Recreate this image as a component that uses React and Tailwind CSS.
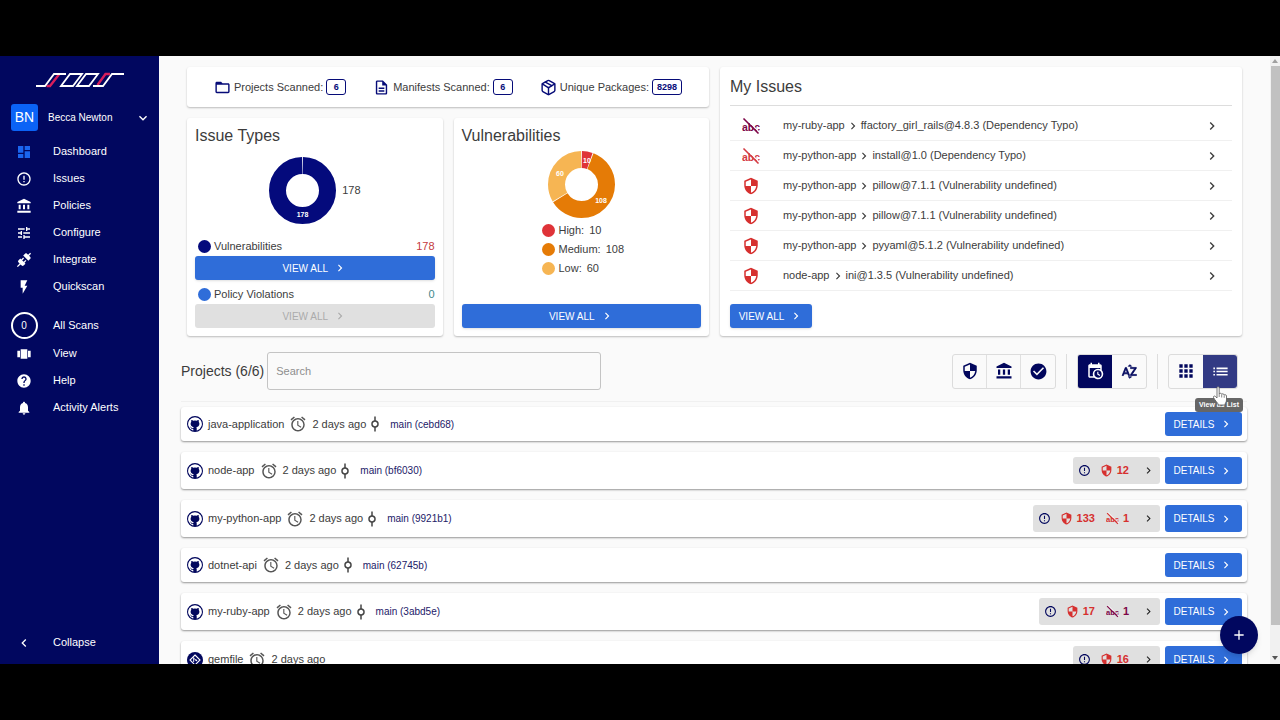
import React from 'react';
import { useState } from 'react';
import {
  MdAccountBalance, MdAdd, MdAlarm, MdApps, MdCheckCircle, MdChevronLeft, MdChevronRight, MdCommit,
  MdDashboard, MdErrorOutline, MdExpandMore, MdFlashOn, MdFolderOpen, MdHelp, MdList, MdNotifications,
  MdOutlineDescription, MdSecurity, MdSortByAlpha, MdTune, MdViewCarousel
} from 'react-icons/md';
import { LuPackage } from 'react-icons/lu';
import { VscGithub } from 'react-icons/vsc';

const PlugIcon = ({ size }) => (
  <svg width={size} height={size} viewBox="0 0 24 24" fill="currentColor">
    <path d="M21.4 7.5C22.2 8.3 22.2 9.6 21.4 10.3L18.6 13.1L10.8 5.3L13.6 2.5C14.4 1.7 15.7 1.7 16.4 2.5L18.2 4.3L21.2 1.3L22.6 2.7L19.6 5.7L21.4 7.5M15.6 13.3L14.2 11.9L11.4 14.7L9.3 12.6L12.1 9.8L10.7 8.4L7.9 11.2L6.4 9.8L3.6 12.6C2.8 13.4 2.8 14.7 3.6 15.4L5.4 17.2L1.4 21.2L2.8 22.6L6.8 18.6L8.6 20.4C9.4 21.2 10.7 21.2 11.4 20.4L14.2 17.6L12.8 16.2L15.6 13.3Z" />
  </svg>
);

const CalendarClockIcon = ({ size }) => (
  <svg width={size} height={size} viewBox="0 0 24 24" fill="currentColor">
    <path d="M15,13H16.5V15.82L18.94,17.23L18.19,18.53L15,16.69V13M19,8H5V19H9.67C9.24,18.09 9,17.07 9,16A7,7 0 0,1 16,9C17.07,9 18.09,9.24 19,9.67V8M5,21C3.89,21 3,20.1 3,19V5C3,3.89 3.89,3 5,3H6V1H8V3H16V1H18V3H19A2,2 0 0,1 21,5V11.1C22.24,12.36 23,14.09 23,16A7,7 0 0,1 16,23C14.09,23 12.36,22.24 11.1,21H5M16,11.15A4.85,4.85 0 0,0 11.15,16C11.15,18.68 13.32,20.85 16,20.85A4.85,4.85 0 0,0 20.85,16C20.85,13.32 18.68,11.15 16,11.15Z" />
  </svg>
);

// struck-through "abc" used for dependency typos
const TypoIcon = ({ size, className }) => (
  <svg width={size} height={size} viewBox="0 0 24 24" className={className}>
    <text x="12" y="18" textAnchor="middle" fontSize="14" fontWeight="700" fill="currentColor" fontFamily="Liberation Sans, sans-serif">abc</text>
    <path d="M3.500 0.500 24 21" stroke="#fff" strokeWidth="1.6" />
    <path d="M2 2 22 22" stroke="currentColor" strokeWidth="2.2" />
  </svg>
);

const GitIcon = ({ size }) => (
  <svg width={size} height={size} viewBox="0 0 24 24">
    <circle cx="12" cy="12" r="12" fill="currentColor" />
    <path d="M12 4.5 19.5 12 12 19.5 4.5 12Z" fill="none" stroke="#fff" strokeWidth="1.6" />
    <path d="M10 8v7M10 9.5l4 3" fill="none" stroke="#fff" strokeWidth="1.4" />
    <circle cx="14" cy="12.5" r="1.4" fill="#fff" />
  </svg>
);

const Logo = () => (
  <svg width="88" height="16" viewBox="0 0 88 16" fill="none" strokeWidth="1.8">
    <path d="M10.500 14H14L23 2.500" stroke="#d81e5b" strokeWidth="2.4" />
    <path d="M61.500 13 69.500 2H74" stroke="#d81e5b" strokeWidth="2.4" />
    <path d="M0 14H9L18 2H30" stroke="#fff" />
    <path d="M25 14 34 2H46L37 14Z" stroke="#fff" />
    <path d="M41 14 50 2H62L53 14Z" stroke="#fff" />
    <path d="M57 14H67L76 2H88" stroke="#fff" />
  </svg>
);

const Donut = ({ slices, labels }) => {
  const total = slices.reduce((sum, s) => sum + s.value, 0);
  let start = 0;
  return (
    <svg width="67" height="67" viewBox="0 0 67 67">
      {slices.map(s => {
        const offset = start;
        start += s.value;
        return (
          <circle
            key={s.color}
            cx="33.5" cy="33.5" r="25" fill="none"
            stroke={s.color} strokeWidth="17" pathLength={total}
            strokeDasharray={`${s.value - 0.8} ${total - s.value + 0.8}`}
            strokeDashoffset={-offset - 0.4}
            transform="rotate(-90 33.5 33.5)"
          />
        );
      })}
      {labels.map(l => (
        <text key={l.text} x={l.x} y={l.y} textAnchor="middle" fontSize="7" fontWeight="700" fill="#fff">{l.text}</text>
      ))}
    </svg>
  );
};

const navItems = [
  { label: 'Dashboard', Icon: MdDashboard, active: true },
  { label: 'Issues', Icon: MdErrorOutline },
  { label: 'Policies', Icon: MdAccountBalance },
  { label: 'Configure', Icon: MdTune },
  { label: 'Integrate', Icon: PlugIcon },
  { label: 'Quickscan', Icon: MdFlashOn }
];

const moreItems = [
  { label: 'View', Icon: MdViewCarousel },
  { label: 'Help', Icon: MdHelp },
  { label: 'Activity Alerts', Icon: MdNotifications }
];

const stats = [
  { label: 'Projects Scanned:', value: '6', Icon: MdFolderOpen },
  { label: 'Manifests Scanned:', value: '6', Icon: MdOutlineDescription },
  { label: 'Unique Packages:', value: '8298', Icon: LuPackage }
];

const severities = [
  { label: 'High:', value: 10, dot: 'bg-[#df3338]' },
  { label: 'Medium:', value: 108, dot: 'bg-[#e57b06]' },
  { label: 'Low:', value: 60, dot: 'bg-[#f6b553]' }
];

const issues = [
  { app: 'my-ruby-app', text: 'ffactory_girl_rails@4.8.3 (Dependency Typo)', Icon: TypoIcon, color: 'text-[#7d0546]' },
  { app: 'my-python-app', text: 'install@1.0 (Dependency Typo)', Icon: TypoIcon, color: 'text-[#d43b42]' },
  { app: 'my-python-app', text: 'pillow@7.1.1 (Vulnerability undefined)', Icon: MdSecurity, color: 'text-[#d6302f]' },
  { app: 'my-python-app', text: 'pillow@7.1.1 (Vulnerability undefined)', Icon: MdSecurity, color: 'text-[#d6302f]' },
  { app: 'my-python-app', text: 'pyyaml@5.1.2 (Vulnerability undefined)', Icon: MdSecurity, color: 'text-[#d6302f]' },
  { app: 'node-app', text: 'ini@1.3.5 (Vulnerability undefined)', Icon: MdSecurity, color: 'text-[#d6302f]' }
];

const projects = [
  { name: 'java-application', branch: 'main (cebd68)' },
  { name: 'node-app', branch: 'main (bf6030)', vulns: 12 },
  { name: 'my-python-app', branch: 'main (9921b1)', vulns: 133, typos: 1, typoColor: 'text-[#d6302f]' },
  { name: 'dotnet-api', branch: 'main (62745b)' },
  { name: 'my-ruby-app', branch: 'main (3abd5e)', vulns: 17, typos: 1, typoColor: 'text-[#7d0546]' },
  { name: 'gemfile', vulns: 16 }
];

const NavItem = ({ label, Icon, active }) => (
  <a href="#" className="flex h-[27px] items-center">
    <span className={active ? 'flex w-12 justify-center text-[#1a66f0]' : 'flex w-12 justify-center'}><Icon size={16} /></span>
    <span className="pl-[5px]">{label}</span>
  </a>
);

const ViewAll = ({ className = '', disabled }) => (
  <button
    disabled={disabled}
    className={`flex h-6 items-center justify-center gap-[5px] rounded-[3px] text-[10px] ${disabled ? 'bg-[#e0e0e0] text-[#ababab]' : 'bg-[#2f6dd9] text-white shadow-sm'} ${className}`}
  >
    VIEW ALL <MdChevronRight size={14} stroke="currentColor" className="[&>path[fill=none]]:stroke-none" />
  </button>
);

const Card = ({ className = '', children }) => (
  <section className={`rounded-[3px] bg-white shadow-[0_1px_2px_rgba(0,0,0,0.25)] ${className}`}>{children}</section>
);

const ToolButton = ({ label, on, children }) => (
  <button aria-label={label} className={`flex h-full w-[34px] items-center justify-center ${on || 'text-[#02075d]'}`}>{children}</button>
);

const Sidebar = () => (
  <aside className="flex w-[159px] shrink-0 flex-col bg-[#01075f] text-[11px] text-white">
    <div className="flex h-12 items-center justify-center"><Logo /></div>
    <button className="flex h-[27px] items-center pr-2 pl-[11px] text-[10px]">
      <span className="flex h-[27px] w-[27px] items-center justify-center rounded-[3px] bg-[#0b63f6] text-[14px]">BN</span>
      <span className="flex-1 pl-[10px] text-left">Becca Newton</span>
      <MdExpandMore size={16} />
    </button>
    <nav className="flex flex-1 flex-col pt-[7px] pb-2">
      {navItems.map(item => <NavItem key={item.label} {...item} />)}
      <a href="#" className="mt-[10px] flex h-[30px] items-center">
        <span className="flex w-12 justify-center">
          <span className="flex h-[27px] w-[27px] items-center justify-center rounded-full border-2 border-white text-[10px]">0</span>
        </span>
        <span className="pl-[5px]">All Scans</span>
      </a>
      {moreItems.map(item => <NavItem key={item.label} {...item} />)}
      <button className="mt-auto flex h-[27px] items-center">
        <span className="flex w-12 justify-center"><MdChevronLeft size={16} /></span>
        <span className="pl-[5px]">Collapse</span>
      </button>
    </nav>
  </aside>
);

const ProjectRow = ({ project }) => (
  <li className="flex items-center gap-[5px] rounded-[3px] bg-white p-[5px] pl-[6px] shadow-[0_1px_2px_rgba(0,0,0,0.4)]">
    <div className="flex flex-1 items-center">
      <span className="mr-[5px] text-[#02075d]">{project.branch ? <VscGithub size={16} /> : <GitIcon size={16} />}</span>
      <span>{project.name}</span>
      <MdAlarm size={18} className="mx-[5px] text-[#555]" />
      <span>2 days ago</span>
      {project.branch && <MdCommit size={18} className="rotate-90 text-[#444]" />}
      {project.branch && <a href="#" className="pl-[6px] text-[10px] text-[#1c2068]">{project.branch}</a>}
    </div>
    {project.vulns && (
      <button className="flex h-[27px] items-center rounded-[3px] bg-[#e0e0e0] px-[5px] font-bold text-[#d6302f]">
        <MdErrorOutline size={13} className="mr-[9px] text-[#02075d]" />
        <MdSecurity size={13} className="mr-1" />
        {project.vulns}
        {project.typos && (
          <span className={`ml-[11px] flex items-center gap-1 ${project.typoColor}`}>
            <TypoIcon size={13} />{project.typos}
          </span>
        )}
        <MdChevronRight size={13} stroke="currentColor" className="ml-[13px] text-[#222] [&>path[fill=none]]:stroke-none" />
      </button>
    )}
    <button className={`${project.vulns ? 'h-[27px]' : 'h-6'} flex w-[77px] items-center justify-center gap-[5px] rounded-[3px] bg-[#2f6dd9] text-[10px] text-white`}>
      DETAILS <MdChevronRight size={14} stroke="currentColor" className="[&>path[fill=none]]:stroke-none" />
    </button>
  </li>
);

const App = () => {
  const [search, setSearch] = useState('');

  return (
    <div className="h-screen bg-black py-14 font-['Liberation_Sans',Arial,sans-serif] text-[11px] text-[#3c3c3c]">
      <div className="relative flex h-full overflow-hidden bg-[#fafafa]">
        <Sidebar />
        <main className="min-w-0 flex-1 overflow-hidden">
          <div className="grid grid-cols-2 gap-[11px] pt-[11px] pr-7 pl-7">
            <div className="flex flex-col gap-[11px]">
              <Card className="flex h-10 items-center justify-evenly">
                {stats.map(({ label, value, Icon }) => (
                  <div key={label} className="flex items-center gap-[3px]">
                    <Icon size={17} className="text-[#060b78]" />
                    <span>{label}</span>
                    <span className="min-w-5 rounded-[3px] border border-[#060b78] px-1 text-center text-[9px]/[14px] font-bold text-[#060b78]">{value}</span>
                  </div>
                ))}
              </Card>
              <div className="grid flex-1 grid-cols-2 gap-[11px]">
                <Card className="flex flex-col p-2">
                  <h2 className="text-[16px]/[20px]">Issue Types</h2>
                  <div className="mt-[11px] grid grid-cols-[1fr_auto_1fr] items-center gap-[6px] pr-6">
                    <span />
                    <Donut slices={[{ value: 178, color: '#040a7c' }]} labels={[{ text: '178', x: 33.5, y: 60 }]} />
                    <span>178</span>
                  </div>
                  <div className="mt-auto flex h-5 items-center gap-[3px] pl-[3px]">
                    <span className="h-[13px] w-[13px] rounded-full bg-[#040a7c]" />
                    <span className="flex-1">Vulnerabilities</span>
                    <span className="text-[#c43a40]">178</span>
                  </div>
                  <ViewAll className="w-full" />
                  <div className="mt-1 flex h-5 items-center gap-[3px] pl-[3px]">
                    <span className="h-[13px] w-[13px] rounded-full bg-[#2f6dd9]" />
                    <span className="flex-1">Policy Violations</span>
                    <span className="text-[#43888c]">0</span>
                  </div>
                  <ViewAll className="w-full" disabled />
                </Card>
                <Card className="flex flex-col items-center p-2">
                  <h2 className="self-stretch text-[16px]/[20px]">Vulnerabilities</h2>
                  <div className="mt-[5px]">
                    <Donut
                      slices={[{ value: 10, color: '#df3338' }, { value: 108, color: '#e57b06' }, { value: 60, color: '#f6b553' }]}
                      labels={[{ text: '10', x: 39, y: 12 }, { text: '108', x: 53, y: 52 }, { text: '60', x: 12, y: 25 }]}
                    />
                  </div>
                  <ul className="mt-[3px] pl-1">
                    {severities.map(s => (
                      <li key={s.label} className="flex h-[19px] items-center gap-[3px]">
                        <span className={`h-[13px] w-[13px] rounded-full ${s.dot}`} />
                        <span>{s.label}</span>
                        <span className="pl-[2px]">{s.value}</span>
                      </li>
                    ))}
                  </ul>
                  <ViewAll className="mt-auto w-full" />
                </Card>
              </div>
            </div>
            <Card className="flex flex-col px-[10px] pt-[10px] pb-2">
              <h2 className="border-b border-[#ddd] pb-2 text-[16px]/[20px]">My Issues</h2>
              <ul className="mt-[5px] mb-[13px]">
                {issues.map((issue, i) => (
                  <li key={i} className="flex h-[30px] items-center border-b border-[#f0f0f0]">
                    <span className={`flex w-[41px] justify-center ${issue.color}`}><issue.Icon size={18} /></span>
                    <a href="#" className="flex flex-1 items-center pl-3">
                      {issue.app}
                      <MdChevronRight size={14} stroke="currentColor" className="mx-[1px] [&>path[fill=none]]:stroke-none" />
                      {issue.text}
                    </a>
                    <MdChevronRight size={16} className="mr-3" />
                  </li>
                ))}
              </ul>
              <ViewAll className="mt-auto w-[82px]" />
            </Card>
          </div>
          <div className="mt-4 flex h-[38px] items-center pr-8 pl-[22px]">
            <h2 className="pr-[3px] text-[14px]">Projects (6/6)</h2>
            <input
              type="text"
              aria-label="Search"
              placeholder="Search"
              value={search}
              onChange={e => setSearch(e.target.value)}
              className="h-[38px] w-[334px] rounded-[3px] border border-[#c4c4c4] px-2 placeholder:text-[#8e8e8e]"
            />
            <div className="ml-auto flex h-[35px] divide-x divide-[#e0e0e0] rounded-[3px] border border-[#dcdcdc]">
              <ToolButton label="Vulnerabilities"><MdSecurity size={18} /></ToolButton>
              <ToolButton label="Policies"><MdAccountBalance size={18} /></ToolButton>
              <ToolButton label="Passing"><MdCheckCircle size={19} /></ToolButton>
            </div>
            <span className="mx-[10px] h-[35px] w-px bg-[#ddd]" />
            <div className="flex h-[35px] overflow-hidden rounded-[3px] border border-[#dcdcdc]">
              <ToolButton label="Sort by date" on="bg-[#02075d] text-white"><CalendarClockIcon size={18} /></ToolButton>
              <ToolButton label="Sort by name">
                <MdSortByAlpha size={17} stroke="currentColor" strokeWidth="1" className="[&>path[fill=none]]:stroke-none" />
              </ToolButton>
            </div>
            <span className="mx-[10px] h-[35px] w-px bg-[#ddd]" />
            <div className="relative flex h-[35px] rounded-[3px] border border-[#dcdcdc]">
              <ToolButton label="View as Grid"><MdApps size={20} /></ToolButton>
              <ToolButton label="View as List" on="rounded-r-[3px] bg-[#323a84] text-white"><MdList size={19} /></ToolButton>
              <div role="tooltip" className="absolute top-[43px] -right-[6px] w-12 rounded-[3px] bg-[#666] text-center text-[7px]/[14px] font-bold text-white">View as List</div>
              <svg className="absolute top-[31px] right-[8px]" width="17" height="20" viewBox="0 0 17 20">
                <path d="M5 1.500C5 .6 7.200.6 7.200 1.500V8C7.400 7 9.500 7 9.700 8.200 10 7.500 12 7.700 12.200 9 12.600 8.400 14.500 8.600 14.500 10V14C14.500 16 13 17 13 19H6.500C6 17 3 14.500 1.500 11.500 1 10 2.800 9.500 3.700 10.700L5 12Z" fill="#fff" stroke="#555" strokeWidth="0.8" />
                <path d="M7.200 8v3M9.700 8.500v3M12.200 9.300v2.500" stroke="#555" strokeWidth="0.7" />
              </svg>
            </div>
          </div>
          <ul className="mt-[11px] mr-[23px] ml-[22px] flex flex-col gap-[11px] border-t border-[#f0f0f0] pt-[5px]">
            {projects.map(project => <ProjectRow key={project.name} project={project} />)}
          </ul>
        </main>
        {/* scroll track */}
        <div className="flex w-[10px] shrink-0 flex-col items-center bg-[#f1f1f1]">
          <span className="my-[3px] border-x-[3px] border-b-4 border-x-transparent border-b-[#a0a0a0]" />
          <span className="w-[9px] flex-1 bg-[#c1c1c1]" />
          <span className="mt-[31px] mb-1 border-x-[3px] border-t-4 border-x-transparent border-t-[#555]" />
        </div>
        <button aria-label="Add project" className="absolute right-[22px] bottom-[10px] flex h-[38px] w-[38px] items-center justify-center rounded-full bg-[#01075f] text-white shadow-md">
          <MdAdd size={16} />
        </button>
      </div>
    </div>
  );
};

export default App;
